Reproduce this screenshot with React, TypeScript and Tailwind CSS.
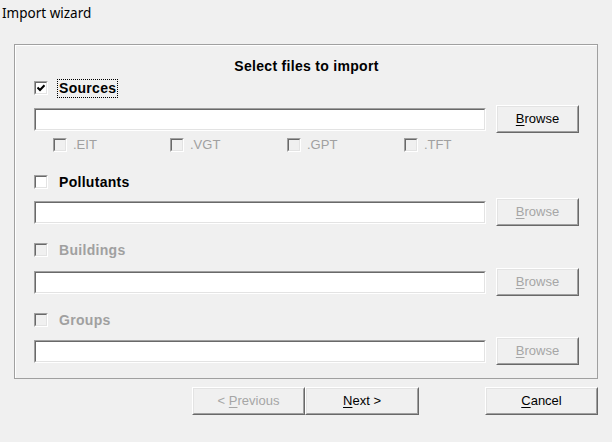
import React from "react";

const dlgFont = { fontFamily: '"Liberation Sans", Arial, sans-serif' };

function CheckBox({ checked = false, disabled = false }: { checked?: boolean; disabled?: boolean }) {
  return (
    <span className="flex h-[14px] w-[14px] shrink-0 border-t border-l border-t-[#a0a0a0] border-l-[#a0a0a0] border-b border-r border-b-white border-r-white">
      <span
        className={`flex flex-1 items-center justify-center border-t border-l border-t-[#696969] border-l-[#696969] border-b border-r border-b-[#e3e3e3] border-r-[#e3e3e3] ${
          disabled ? "bg-[#f0f0f0]" : "bg-white"
        }`}
      >
        {checked && (
          <svg width="8" height="8" viewBox="0 0 8 8">
            <path d="M0.5 3.5 L3 6 L7.5 1.2" stroke="#000" strokeWidth="2" fill="none" />
          </svg>
        )}
      </span>
    </span>
  );
}

function TextBox() {
  return (
    <div className="flex h-[23px] flex-1 border-t border-l border-t-[#a0a0a0] border-l-[#a0a0a0] border-b border-r border-b-white border-r-white">
      <div className="flex-1 border-t border-l border-t-[#696969] border-l-[#696969] border-b border-r border-b-[#e3e3e3] border-r-[#e3e3e3] bg-white" />
    </div>
  );
}

function Button({
  mnemonic,
  rest,
  prefix = "",
  disabled = false,
  width,
}: {
  mnemonic: string;
  rest: string;
  prefix?: string;
  disabled?: boolean;
  width: string;
}) {
  return (
    <div
      className={`flex h-[28px] ${width} shrink-0 border-t border-l border-t-white border-l-white border-b border-r border-b-[#696969] border-r-[#696969]`}
    >
      <div
        className={`flex flex-1 items-center justify-center border-t border-l border-t-[#e3e3e3] border-l-[#e3e3e3] border-b border-r border-b-[#a0a0a0] border-r-[#a0a0a0] bg-[#f0f0f0] text-[13px] ${
          disabled ? "text-[#a6a6a6]" : "text-black"
        }`}
        style={dlgFont}
      >
        <span className="whitespace-pre">
          {prefix}
          <span className="underline underline-offset-2">{mnemonic}</span>
          {rest}
        </span>
      </div>
    </div>
  );
}

function SectionHeader({
  label,
  checked = false,
  disabled = false,
  focused = false,
}: {
  label: string;
  checked?: boolean;
  disabled?: boolean;
  focused?: boolean;
}) {
  return (
    <div className="flex h-[20px] items-center">
      <CheckBox checked={checked} disabled={disabled} />
      <span
        className={`ml-[9px] flex h-[19px] items-center px-[1px] text-[14px] font-bold tracking-[0.3px] ${
          focused ? "border border-dotted border-black" : "border border-transparent"
        } ${disabled ? "text-[#a0a0a0]" : "text-black"}`}
        style={dlgFont}
      >
        {label}
      </span>
    </div>
  );
}

function FileRow({ disabled = false }: { disabled?: boolean }) {
  return (
    <div className="flex h-[28px] items-center gap-[10px]">
      <TextBox />
      <Button mnemonic="B" rest="rowse" disabled={disabled} width="w-[83px]" />
    </div>
  );
}

export default function App() {
  const exts = [".EIT", ".VGT", ".GPT", ".TFT"];

  return (
    <div className="flex h-[442px] w-[612px] flex-col bg-[#f0f0f0]">
      {/* title */}
      <div
        className="flex h-[26px] items-center pl-[2px] text-[13.5px] text-black"
        style={{ fontFamily: '"Noto Sans", "Open Sans", sans-serif' }}
      >
        Import wizard
      </div>

      {/* group box */}
      <div className="ml-[14px] mt-[18px] flex w-[584px] flex-col border border-[#a0a0a0] pb-[13px] pl-[19px] pr-[18px] pt-[13px] shadow-[inset_1px_1px_0_#fff]">
        <div
          className="flex h-[16px] items-center justify-center text-[14px] font-bold tracking-[0.3px] text-black"
          style={dlgFont}
        >
          Select files to import
        </div>

        <div className="mt-[4px]">
          <SectionHeader label="Sources" checked focused />
        </div>
        <div className="mt-[7px]">
          <FileRow />
        </div>
        <div className="mt-[4px] flex h-[16px] items-center pl-[19px]">
          {exts.map((e, i) => (
            <div key={e} className={`flex items-center ${i < 3 ? "w-[117px]" : ""}`}>
              <CheckBox disabled />
              <span className="ml-[6px] text-[13px] text-[#a0a0a0]" style={dlgFont}>
                {e}
              </span>
            </div>
          ))}
        </div>

        <div className="mt-[19px]">
          <SectionHeader label="Pollutants" />
        </div>
        <div className="mt-[6px]">
          <FileRow disabled />
        </div>

        <div className="mt-[14px]">
          <SectionHeader label="Buildings" disabled />
        </div>
        <div className="mt-[8px]">
          <FileRow disabled />
        </div>

        <div className="mt-[14px]">
          <SectionHeader label="Groups" disabled />
        </div>
        <div className="mt-[7px]">
          <FileRow disabled />
        </div>
      </div>

      {/* footer buttons */}
      <div className="mt-[8px] flex pl-[192px]">
        <Button prefix="< " mnemonic="P" rest="revious" disabled width="w-[113px]" />
        <Button mnemonic="N" rest="ext >" width="w-[114px]" />
        <div className="ml-[66px]">
          <Button mnemonic="C" rest="ancel" width="w-[113px]" />
        </div>
      </div>
    </div>
  );
}
